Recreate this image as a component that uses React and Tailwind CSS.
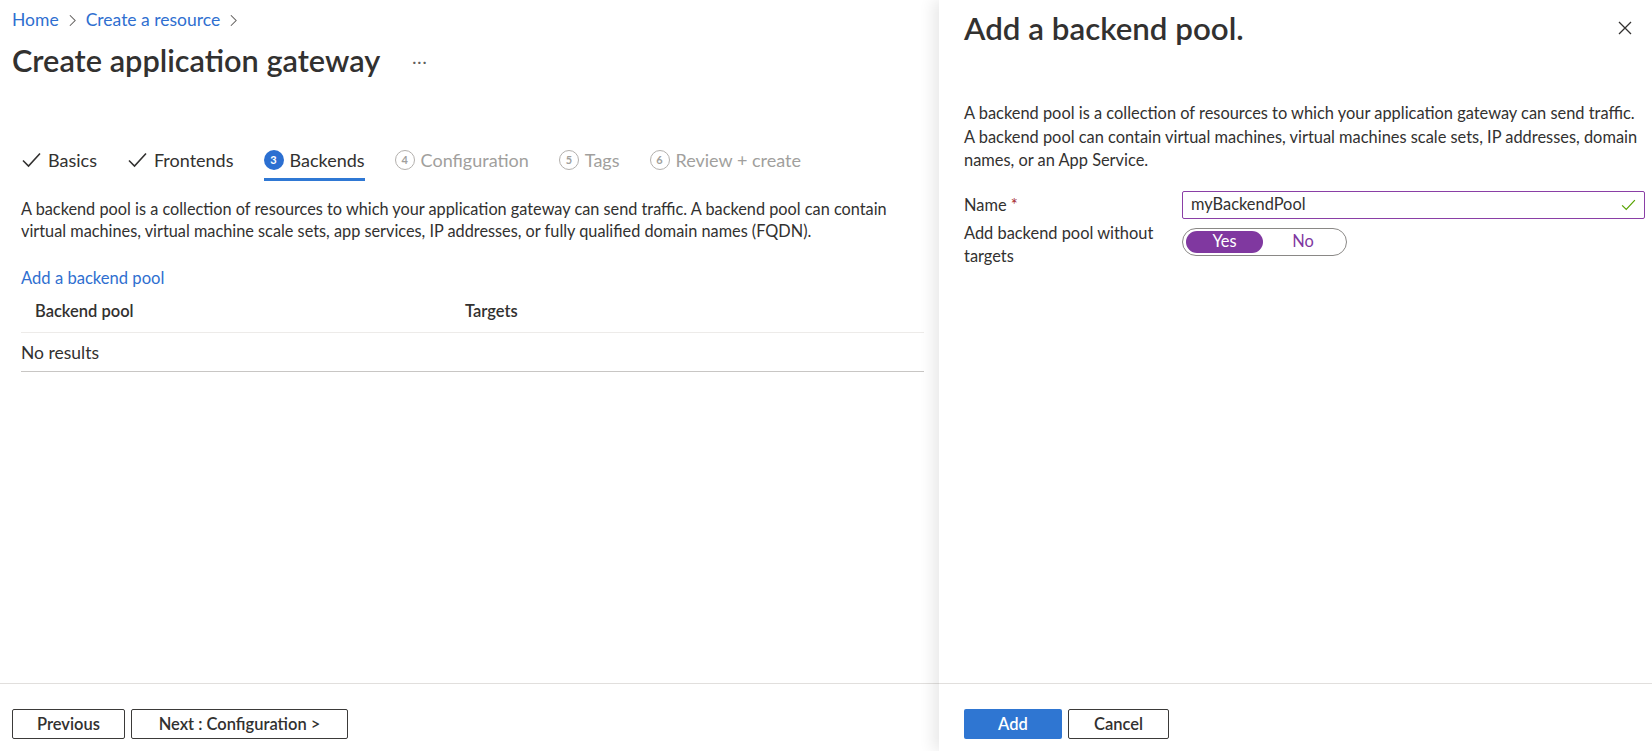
import React from 'react';

function Check({ className = '' }) {
  return (
    <svg viewBox="0 0 20 16" className={className} fill="none" stroke="currentColor" strokeWidth="1.6">
      <path d="M1.5 8.5 L7 14 L18.5 1.5" />
    </svg>
  );
}

function Chevron() {
  return (
    <svg viewBox="0 0 8 14" className="mx-[10px] h-[13px] w-[7px] text-[#605e5c]" fill="none" stroke="currentColor" strokeWidth="1.2">
      <path d="M1 1 L7 7 L1 13" />
    </svg>
  );
}

function StepCircle({ n, active }) {
  if (active) {
    return (
      <span className="flex h-[20px] w-[20px] items-center justify-center rounded-full bg-[#2b6fd1] text-[11px] font-bold text-white">
        {n}
      </span>
    );
  }
  return (
    <span className="flex h-[20px] w-[20px] items-center justify-center rounded-full border border-[#b3b0ad] text-[11px] font-bold text-[#a19f9d]">
      {n}
    </span>
  );
}

const tabs = [
  { label: 'Basics', done: true },
  { label: 'Frontends', done: true },
  { label: 'Backends', n: 3, active: true },
  { label: 'Configuration', n: 4 },
  { label: 'Tags', n: 5 },
  { label: 'Review + create', n: 6 },
];

function Tabs() {
  return (
    <div className="flex gap-[30px] pl-[21px]">
      {tabs.map((t) => (
        <div
          key={t.label}
          className={
            'flex items-center gap-[6px] border-b-[3px] pb-[6px] text-[18px] leading-[24px] ' +
            (t.active ? 'border-[#2f78d4] text-[#323130]' : 'border-transparent') +
            (t.done ? ' text-[#323130]' : '') +
            (!t.done && !t.active ? ' text-[#a19f9d]' : '')
          }
        >
          {t.done ? <Check className="h-[16px] w-[21px] text-[#323130]" /> : <StepCircle n={t.n} active={t.active} />}
          <span>{t.label}</span>
        </div>
      ))}
    </div>
  );
}

function Btn({ children, className = '' }) {
  return (
    <button className={'h-[30px] rounded-[2px] border border-[#3b3a39] bg-white text-[16.5px] font-semibold text-[#323130] ' + className}>
      {children}
    </button>
  );
}

export default function App() {
  return (
    <div className="flex h-[751px] w-[1652px] overflow-hidden bg-white font-['Lato','Segoe_UI',sans-serif] text-[#323130]">
      <main className="flex w-[939px] flex-col">
        <div className="flex-1 pr-[15px]">
          <nav className="flex items-center pl-[12px] pt-[9px] text-[17.5px] leading-[22px] text-[#2f6fd0]">
            <span>Home</span>
            <Chevron />
            <span>Create a resource</span>
            <Chevron />
          </nav>
          <div className="mt-[10px] flex items-center pl-[12px]">
            <h1 className="text-[30.7px] font-semibold leading-[40px] text-[#323130]">Create application gateway</h1>
            <span className="ml-[32px] text-[16px] tracking-[1px] text-[#605e5c]">···</span>
          </div>

          <div className="mt-[67px]">
            <Tabs />
          </div>

          <div className="pl-[21px]">
            <p className="mt-[17px] text-[16.3px] leading-[22px]">
              A backend pool is a collection of resources to which your application gateway can send traffic. A backend pool can contain
              <br />
              virtual machines, virtual machine scale sets, app services, IP addresses, or fully qualified domain names (FQDN).
            </p>
            <a className="mt-[25px] block text-[16.6px] leading-[22px] text-[#2f6fd0]">Add a backend pool</a>

            <div className="leading-[22px]">
              <div className="grid grid-cols-[430px_1fr] border-b border-[#edebe9] pb-[10px] pt-[11px] text-[16.5px] font-semibold">
                <span className="pl-[14px]">Backend pool</span>
                <span className="pl-[14px]">Targets</span>
              </div>
              <div className="border-b border-[#c8c6c4] pb-[7px] pt-[9px] text-[17.5px]">No results</div>
            </div>
          </div>
        </div>

        <footer className="flex h-[68px] gap-[6px] border-t border-[#e1dfdd] pl-[12px] pt-[25px]">
          <Btn className="w-[113px]">Previous</Btn>
          <Btn className="w-[217px]">Next : Configuration &gt;</Btn>
        </footer>
      </main>

      <aside className="z-10 flex flex-1 flex-col bg-white shadow-[-6px_0_14px_rgba(0,0,0,0.09)]">
        <div className="flex-1 pl-[25px] pr-[7px]">
          <div className="flex items-center justify-between pr-[13px] pt-[8px]">
            <h2 className="text-[31.3px] font-semibold leading-[40px]">Add a backend pool.</h2>
            <svg viewBox="0 0 14 14" className="h-[14px] w-[14px] text-[#323130]" fill="none" stroke="currentColor" strokeWidth="1.3">
              <path d="M1 1 L13 13 M13 1 L1 13" />
            </svg>
          </div>

          <p className="mt-[53px] text-[16.4px] leading-[23.5px]">
            A backend pool is a collection of resources to which your application gateway can send traffic.
            <br />
            A backend pool can contain virtual machines, virtual machines scale sets, IP addresses, domain
            <br />
            names, or an App Service.
          </p>

          <div className="mt-[19px] flex items-center">
            <label className="w-[218px] text-[16.4px] leading-[23px]">
              Name <span className="text-[#a4262c]">*</span>
            </label>
            <div className="flex h-[28px] flex-1 items-center justify-between rounded-[2px] border border-[#8a3fa6] pl-[8px] pr-[8px] text-[16.4px]">
              <span>myBackendPool</span>
              <Check className="h-[12px] w-[15px] text-[#57a300]" />
            </div>
          </div>

          <div className="mt-[2px] flex items-start">
            <label className="w-[218px] text-[16.4px] leading-[23px]">
              Add backend pool without
              <br />
              targets
            </label>
            <div className="mt-[7px] flex h-[28px] w-[165px] items-center rounded-full border border-[#8a8886] px-[3px] text-[16.4px]">
              <span className="flex h-[22px] w-[77px] items-center justify-center rounded-full bg-[#8038a0] text-white">Yes</span>
              <span className="flex-1 text-center text-[#8038a0]">No</span>
            </div>
          </div>
        </div>

        <footer className="flex h-[68px] gap-[6px] border-t border-[#e1dfdd] pl-[25px] pt-[25px]">
          <button className="h-[30px] w-[98px] rounded-[2px] bg-[#2f76d2] text-[16.5px] font-semibold text-white">Add</button>
          <Btn className="w-[101px]">Cancel</Btn>
        </footer>
      </aside>
    </div>
  );
}
